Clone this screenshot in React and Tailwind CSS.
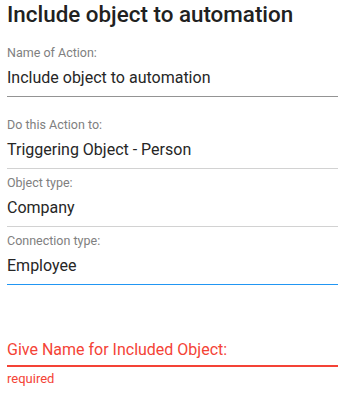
const FIELDS = [
  { label: 'Do this Action to:', value: 'Triggering Object - Person', line: 'border-[#d2d2d2]' },
  { label: 'Object type:', value: 'Company', line: 'border-[#d2d2d2]' },
  { label: 'Connection type:', value: 'Employee', line: 'border-[#2196f3]' },
];

function Field({ label, value, line }) {
  return (
    <div className={`border-b ${line}`}>
      <div className="text-[12.5px] leading-[14px] text-[#808080]">{label}</div>
      <div className="mt-1.5 pb-1.5 text-[16px] leading-6 text-[#262626]">{value}</div>
    </div>
  );
}

export default function App() {
  return (
    <div
      className="w-[338px] h-[399px] bg-white pl-[7px] overflow-hidden"
      style={{ fontFamily: 'Roboto, "Liberation Sans", sans-serif' }}
    >
      <h1 className="text-[22.4px] leading-7 font-medium text-[#212121]">Include object to automation</h1>

      <div className="mt-[18px]">
        <Field label="Name of Action:" value="Include object to automation" line="border-[#949494]" />
      </div>

      <div className="mt-[21px] flex flex-col gap-[7px]">
        {FIELDS.map((f) => (
          <Field key={f.label} {...f} />
        ))}
      </div>

      <div className="mt-[53px]">
        <div className="pb-[3px] border-b-2 border-[#f44336] text-[16px] leading-6 text-[#f44336]">
          Give Name for Included Object:
        </div>
        <div className="mt-[5px] text-[13px] leading-[14px] text-[#f44336]">required</div>
      </div>
    </div>
  );
}
